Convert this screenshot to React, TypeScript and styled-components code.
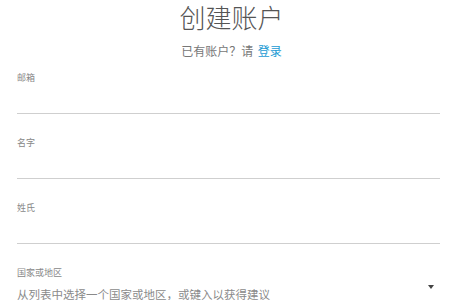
import styled, { createGlobalStyle } from "styled-components";

const GlobalStyle = createGlobalStyle`
  body {
    margin: 0;
    background: #ffffff;
    font-family: "Noto Sans CJK SC", "Noto Sans", sans-serif;
  }
`

const Page = styled.div`
  padding: 1px 10px 0 17px;
`

const Header = styled.div`
  display: flex;
  flex-direction: column;
  align-items: center;
  padding-left: 6px;
`

const Title = styled.h1`
  margin: 0;
  font-size: 26px;
  line-height: 32px;
  font-weight: 300;
  color: #555;
`

const SubTitle = styled.div`
  margin-top: 10px;
  font-size: 12px;
  line-height: 16px;
  color: #777;
`

const LoginLink = styled.a`
  color: #1b9bd4;
  text-decoration: none;
  margin-left: 2px;
`

const Form = styled.form`
  display: flex;
  flex-direction: column;
  margin-top: 13px;
`

const Field = styled.label<{ $first?: boolean }>`
  display: flex;
  flex-direction: column;
  padding-top: ${(p) => (p.$first ? 0 : 23)}px;
  position: relative;
`

const Label = styled.span`
  font-size: 9px;
  line-height: 12px;
  color: #888;
`

const Input = styled.input`
  height: 29px;
  padding: 0;
  border: none;
  border-bottom: 1px solid #cfcfcf;
  outline: none;
  background: transparent;
  font-family: inherit;
  font-size: 12px;
  color: #333;

  &::placeholder {
    color: #8a8a8a;
  }
`

const SelectInput = styled(Input)`
  height: 14px;
  padding-top: 8px;
  border-bottom: none;
  font-size: 11.5px;
`

const Caret = styled.span`
  position: absolute;
  right: 6px;
  top: 41px;
  width: 0;
  height: 0;
  border-left: 3px solid transparent;
  border-right: 3px solid transparent;
  border-top: 4px solid #444;
`

export default function App() {
  return (
    <Page>
      <GlobalStyle />
      <Header>
        <Title>创建账户</Title>
        <SubTitle>
          已有账户？请 <LoginLink href="#">登录</LoginLink>
        </SubTitle>
      </Header>
      <Form>
        <Field $first>
          <Label>邮箱</Label>
          <Input type="email" />
        </Field>
        <Field>
          <Label>名字</Label>
          <Input type="text" />
        </Field>
        <Field>
          <Label>姓氏</Label>
          <Input type="text" />
        </Field>
        <Field>
          <Label>国家或地区</Label>
          <SelectInput type="text" placeholder="从列表中选择一个国家或地区，或键入以获得建议" />
          <Caret />
        </Field>
      </Form>
    </Page>
  )
}
